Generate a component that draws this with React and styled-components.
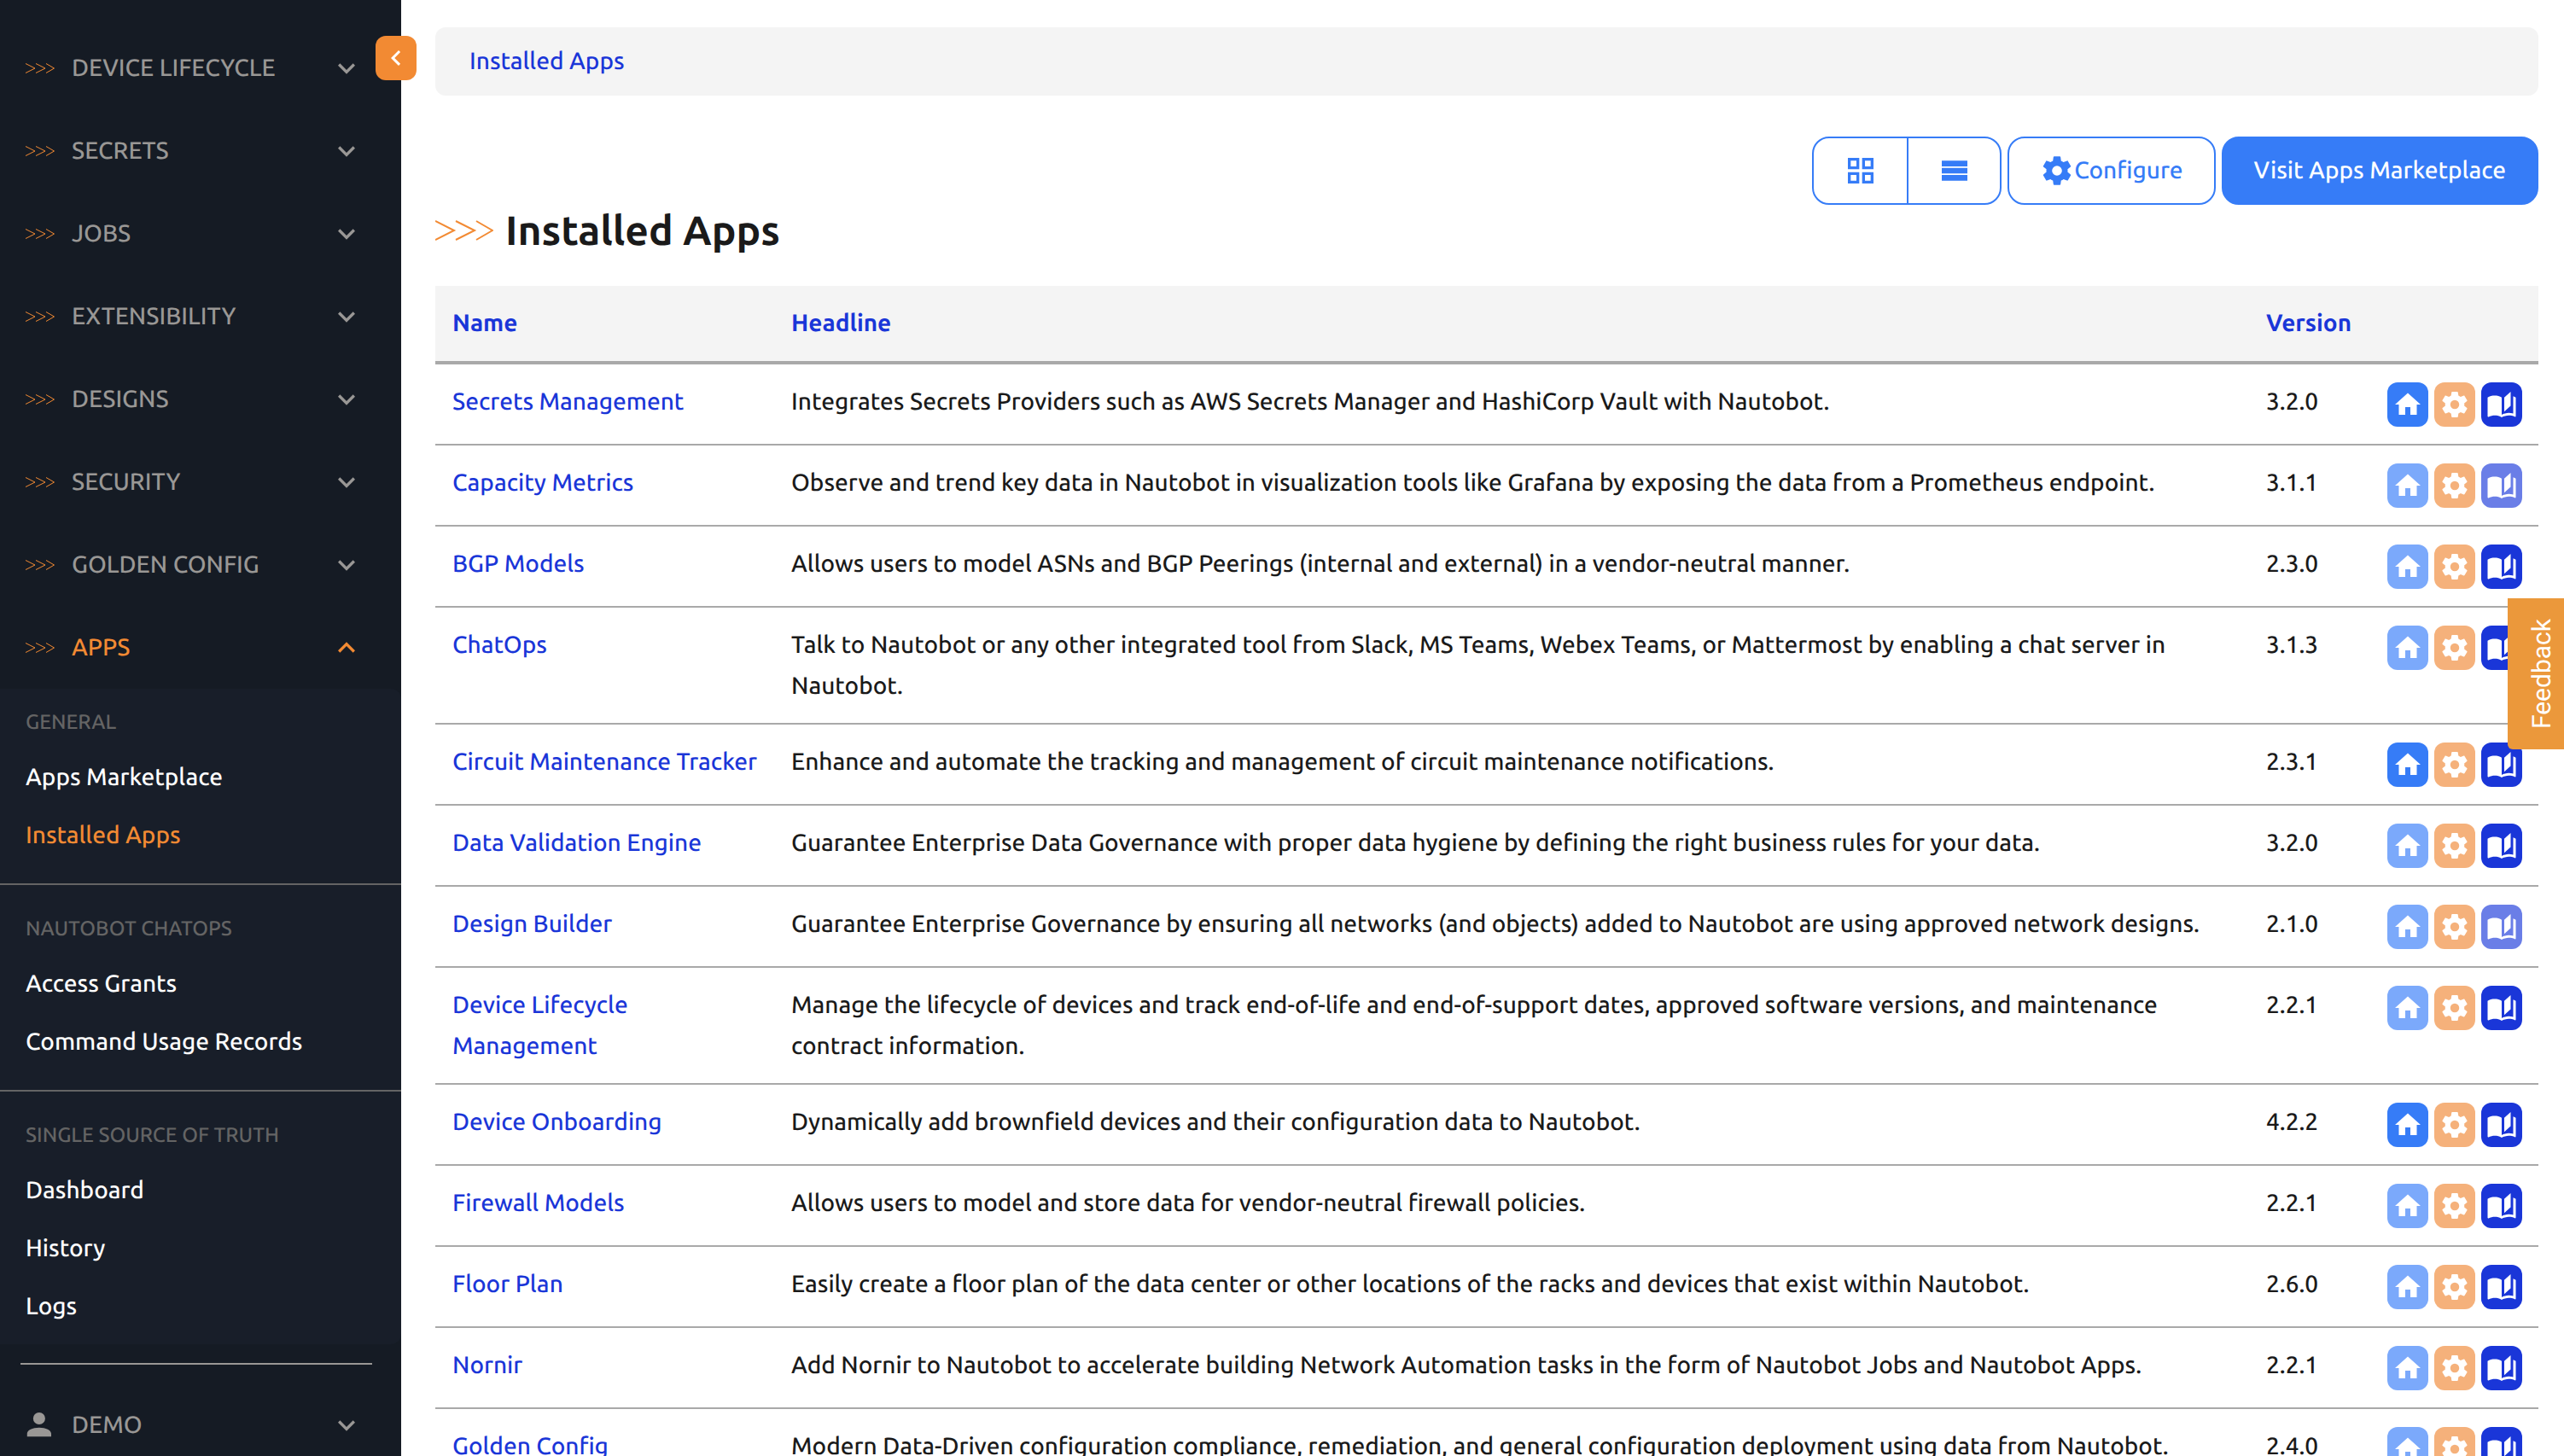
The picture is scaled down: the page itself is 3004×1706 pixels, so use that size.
import React from "react";
import styled, { createGlobalStyle, css } from "styled-components";

const GlobalStyle = createGlobalStyle`
  *, *::before, *::after { box-sizing: border-box; }
  body {
    margin: 0;
    background: #fff;
    color: #1a1a1a;
    font-family: Ubuntu, "Noto Sans", sans-serif;
    font-size: 28px;
    font-weight: 500;
    line-height: 48px;
    text-rendering: geometricPrecision;
  }
  a { color: inherit; text-decoration: none; }
  button { font: inherit; text-rendering: inherit; cursor: pointer; }
`;

const ICONS = {
  chevronDown: "M7.41,8.58L12,13.17L16.59,8.58L18,10L12,16L6,10L7.41,8.58Z",
  chevronUp: "M7.41,15.41L12,10.83L16.59,15.41L18,14L12,8L6,14L7.41,15.41Z",
  chevronLeft: "M15.41,16.58L10.83,12L15.41,7.41L14,6L8,12L14,18L15.41,16.58Z",
  account:
    "M12,4A4,4 0 0,1 16,8A4,4 0 0,1 12,12A4,4 0 0,1 8,8A4,4 0 0,1 12,4M12,14C16.42,14 20,15.79 20,18V20H4V18C4,15.79 7.58,14 12,14Z",
  home: "M10,20V14H14V20H19V12H22L12,3L2,12H5V20H10Z",
  cog: "M12,15.5A3.5,3.5 0 0,1 8.5,12A3.5,3.5 0 0,1 12,8.5A3.5,3.5 0 0,1 15.5,12A3.5,3.5 0 0,1 12,15.5M19.43,12.97C19.47,12.65 19.5,12.33 19.5,12C19.5,11.67 19.47,11.34 19.43,11L21.54,9.37C21.73,9.22 21.78,8.95 21.66,8.73L19.66,5.27C19.54,5.05 19.27,4.96 19.05,5.05L16.56,6.05C16.04,5.66 15.5,5.32 14.87,5.07L14.5,2.42C14.46,2.18 14.25,2 14,2H10C9.75,2 9.54,2.18 9.5,2.42L9.13,5.07C8.5,5.32 7.96,5.66 7.44,6.05L4.95,5.05C4.73,4.96 4.46,5.05 4.34,5.27L2.34,8.73C2.21,8.95 2.27,9.22 2.46,9.37L4.57,11C4.53,11.34 4.5,11.67 4.5,12C4.5,12.33 4.53,12.65 4.57,12.97L2.46,14.63C2.27,14.78 2.21,15.05 2.34,15.27L4.34,18.73C4.46,18.95 4.73,19.03 4.95,18.95L7.44,17.94C7.96,18.34 8.5,18.68 9.13,18.93L9.5,21.58C9.54,21.82 9.75,22 10,22H14C14.25,22 14.46,21.82 14.5,21.58L14.87,18.93C15.5,18.67 16.04,18.34 16.56,17.94L19.05,18.95C19.27,19.03 19.54,18.95 19.66,18.73L21.66,15.27C21.78,15.05 21.73,14.78 21.54,14.63L19.43,12.97Z",
  book: "M19 2L14 6.5V17.5L19 13V2M6.5 5C4.55 5 2.45 5.4 1 6.5V21.16C1 21.41 1.25 21.66 1.5 21.66C1.6 21.66 1.65 21.59 1.75 21.59C3.1 20.94 5.05 20.5 6.5 20.5C8.45 20.5 10.55 20.9 12 22C13.35 21.15 15.8 20.5 17.5 20.5C19.15 20.5 20.85 20.81 22.25 21.56C22.35 21.61 22.4 21.59 22.5 21.59C22.75 21.59 23 21.34 23 21.09V6.5C22.4 6.05 21.75 5.75 21 5.5V19C19.9 18.65 18.7 18.5 17.5 18.5C15.8 18.5 13.35 19.15 12 20V6.5C10.55 5.4 8.45 5 6.5 5Z",
  grid: "M3 11H11V3H3M5 5H9V9H5M13 21H21V13H13M15 15H19V19H15M3 21H11V13H3M5 15H9V19H5M13 3V11H21V3M19 9H15V5H19Z",
  rows: "M3 5H21V9H3ZM3 10H21V14H3ZM3 15H21V19H3Z",
};

const Svg = styled.svg`
  display: block;
  flex: none;
  fill: currentColor;
`;

const Icon = ({ name, size = 40, box = "0 0 24 24" }) => (
  <Svg width={size} height={size} viewBox={box} fillRule="evenodd" aria-hidden="true">
    <path d={ICONS[name]} />
  </Svg>
);

const ArrowsSvg = styled.svg`
  display: block;
  flex: none;
  fill: none;
  stroke: #f28a33;
`;

const Arrows = ({ width, height, stroke }) => (
  <ArrowsSvg width={width} height={height} viewBox="0 0 68 24" strokeWidth={stroke} aria-hidden="true">
    <path d="M0 1L22 12L0 23M24 1L46 12L24 23M48 1L67 12L48 23" />
  </ArrowsSvg>
);

const Shell = styled.div`
  display: flex;
  height: 100vh;
  overflow: hidden;
`;

const Sidebar = styled.aside`
  position: relative;
  flex: 0 0 470px;
  padding-top: 31px;
  background: #151b24;
  color: #999795;
`;

const CollapseButton = styled.button`
  position: absolute;
  top: 42px;
  right: -18px;
  display: flex;
  align-items: center;
  justify-content: center;
  width: 48px;
  height: 52px;
  padding: 0;
  border: 0;
  border-radius: 12px;
  background: #f28a33;
  color: #fff;
`;

const MenuToggle = styled.button`
  display: flex;
  align-items: center;
  width: 100%;
  height: 97px;
  padding: 0 44px 0 30px;
  border: 0;
  background: none;
  color: ${(p) => (p.$active ? "#f28a33" : "#999795")};
  text-align: left;
`;

const MenuMark = styled.span`
  display: flex;
  width: 54px;
`;

const MenuLabel = styled.span`
  flex: 1;
`;

const SubMenu = styled.div`
  background: #181e29;
  border-radius: 0 12px 12px 0;
`;

const SubSection = styled.section`
  padding: 22px 0 10px;
  & + & {
    margin-top: 12px;
    padding-top: 34px;
    border-top: 2px solid #646464;
  }
`;

const SubHeading = styled.h2`
  margin: 0 0 14px;
  padding-left: 30px;
  color: #646464;
  font-size: 24px;
  font-weight: inherit;
  line-height: 34px;
`;

const SubLink = styled.a`
  display: block;
  padding-left: 30px;
  color: ${(p) => (p.$active ? "#f28a33" : "#fff")};
  line-height: 68px;
`;

const MenuRule = styled.hr`
  height: 2px;
  margin: 22px 34px 22px 24px;
  border: 0;
  background: #999795;
`;

const Main = styled.main`
  flex: 1;
  min-width: 0;
  padding: 32px 30px 0 40px;
`;

const Breadcrumb = styled.nav`
  padding: 16px 40px;
  border-radius: 12px;
  background: #f4f4f4;
  color: #1a36d8;
`;

const Toolbar = styled.div`
  display: flex;
  justify-content: flex-end;
  gap: 7px;
  margin-top: 48px;
`;

const outline = css`
  border: 2px solid #367cf7;
  background: #fff;
  color: #367cf7;
`;

const ToolButton = styled.button`
  display: flex;
  align-items: center;
  height: 80px;
  padding: 0 36px;
  border-radius: 20px;
  ${outline}
  ${(p) => p.$primary && css`background: #367cf7; color: #fff;`}
`;

const ViewSwitch = styled.div`
  display: flex;
  height: 80px;
  border-radius: 20px;
  overflow: hidden;
  ${outline}
`;

const ViewButton = styled.button`
  display: flex;
  align-items: center;
  justify-content: center;
  width: 109px;
  padding: 0;
  border: 0;
  background: none;
  color: inherit;
  & + & {
    border-left: 2px solid #367cf7;
  }
`;

const TitleRow = styled.header`
  display: flex;
  align-items: center;
  gap: 14px;
  margin-bottom: 35px;
`;

const Title = styled.h1`
  margin: 0;
  font-size: 48px;
  font-weight: 600;
  line-height: 60px;
`;

const Table = styled.table`
  width: 100%;
  border-collapse: separate;
  border-spacing: 0;
  table-layout: fixed;
`;

const Col = styled.col`
  width: ${(p) => p.$width};
`;

const Th = styled.th`
  padding: 20px;
  border-bottom: 4px solid #a9a9a9;
  background: #f4f4f4;
  color: #1a36d8;
  font-weight: 700;
  text-align: left;
`;

const Td = styled.td`
  height: 95px;
  padding: 20px ${(p) => (p.$wide ? "40px" : "10px")} 19px 20px;
  border-bottom: 2px solid #a9a9a9;
  vertical-align: top;
`;

const NameLink = styled.a`
  color: #1a36d8;
`;

const Actions = styled.div`
  display: flex;
  gap: 7px;
  padding-top: 1px;
`;

const TONES = { home: "#367cf7", cog: "#f5b17b", book: "#1a36d8" };
const TONES_OFF = { home: "#7ba9fb", cog: "#f5b17b", book: "#6a7ee7" };

const ActionButton = styled.button`
  display: flex;
  align-items: center;
  justify-content: center;
  width: 48px;
  height: 52px;
  padding: 0;
  border: 0;
  border-radius: 12px;
  background: ${(p) => (p.disabled ? TONES_OFF : TONES)[p.$kind]};
  color: #fff;
`;

const Feedback = styled.button`
  position: fixed;
  top: 701px;
  right: 0;
  display: flex;
  align-items: center;
  justify-content: center;
  width: 66px;
  height: 177px;
  padding: 0 0 0 16px;
  border: 0;
  border-radius: 0 0 0 6px;
  background: #eb983b;
  color: #fff;
`;

const FeedbackLabel = styled.span`
  writing-mode: vertical-rl;
  rotate: 180deg;
  font-family: Roboto, sans-serif;
  font-size: 30px;
  font-weight: 400;
  line-height: 50px;
`;

const MENU = [
  "DEVICE LIFECYCLE",
  "SECRETS",
  "JOBS",
  "EXTENSIBILITY",
  "DESIGNS",
  "SECURITY",
  "GOLDEN CONFIG",
];

const SECTIONS = [
  { title: "GENERAL", links: ["Apps Marketplace", "Installed Apps"] },
  { title: "NAUTOBOT CHATOPS", links: ["Access Grants", "Command Usage Records"] },
  { title: "SINGLE SOURCE OF TRUTH", links: ["Dashboard", "History", "Logs"] },
];

const APPS = [
  { name: "Secrets Management", headline: "Integrates Secrets Providers such as AWS Secrets Manager and HashiCorp Vault with Nautobot.", version: "3.2.0", home: true, docs: true },
  { name: "Capacity Metrics", headline: "Observe and trend key data in Nautobot in visualization tools like Grafana by exposing the data from a Prometheus endpoint.", version: "3.1.1", home: false, docs: false },
  { name: "BGP Models", headline: "Allows users to model ASNs and BGP Peerings (internal and external) in a vendor-neutral manner.", version: "2.3.0", home: false, docs: true },
  { name: "ChatOps", headline: "Talk to Nautobot or any other integrated tool from Slack, MS Teams, Webex Teams, or Mattermost by enabling a chat server in Nautobot.", version: "3.1.3", home: false, docs: true },
  { name: "Circuit Maintenance Tracker", headline: "Enhance and automate the tracking and management of circuit maintenance notifications.", version: "2.3.1", home: true, docs: true },
  { name: "Data Validation Engine", headline: "Guarantee Enterprise Data Governance with proper data hygiene by defining the right business rules for your data.", version: "3.2.0", home: false, docs: true },
  { name: "Design Builder", headline: "Guarantee Enterprise Governance by ensuring all networks (and objects) added to Nautobot are using approved network designs.", version: "2.1.0", home: false, docs: false },
  { name: "Device Lifecycle Management", headline: "Manage the lifecycle of devices and track end-of-life and end-of-support dates, approved software versions, and maintenance contract information.", version: "2.2.1", home: false, docs: true },
  { name: "Device Onboarding", headline: "Dynamically add brownfield devices and their configuration data to Nautobot.", version: "4.2.2", home: true, docs: true },
  { name: "Firewall Models", headline: "Allows users to model and store data for vendor-neutral firewall policies.", version: "2.2.1", home: false, docs: true },
  { name: "Floor Plan", headline: "Easily create a floor plan of the data center or other locations of the racks and devices that exist within Nautobot.", version: "2.6.0", home: false, docs: true },
  { name: "Nornir", headline: "Add Nornir to Nautobot to accelerate building Network Automation tasks in the form of Nautobot Jobs and Nautobot Apps.", version: "2.2.1", home: false, docs: true },
  { name: "Golden Config", headline: "Modern Data-Driven configuration compliance, remediation, and general configuration deployment using data from Nautobot.", version: "2.4.0", home: false, docs: true },
];

const MenuItem = ({ label, active }) => (
  <MenuToggle $active={active} aria-expanded={!!active}>
    <MenuMark>
      <Arrows width={34} height={12} stroke={2} />
    </MenuMark>
    <MenuLabel>{label}</MenuLabel>
    <Icon name={active ? "chevronUp" : "chevronDown"} />
  </MenuToggle>
);

const AppRow = ({ app }) => (
  <tr>
    <Td>
      <NameLink href="#app">{app.name}</NameLink>
    </Td>
    <Td $wide>{app.headline}</Td>
    <Td>{app.version}</Td>
    <Td>
      <Actions>
        <ActionButton $kind="home" disabled={!app.home} aria-label="Home">
          <Icon name="home" size={36} />
        </ActionButton>
        <ActionButton $kind="cog" disabled aria-label="Configure">
          <Icon name="cog" size={36} />
        </ActionButton>
        <ActionButton $kind="book" disabled={!app.docs} aria-label="Docs">
          <Icon name="book" size={36} />
        </ActionButton>
      </Actions>
    </Td>
  </tr>
);

export default function App() {
  return (
    <>
      <GlobalStyle />
      <Shell>
        <Sidebar>
          {MENU.map((label) => (
            <MenuItem key={label} label={label} />
          ))}
          <MenuItem label="APPS" active />
          <SubMenu>
            {SECTIONS.map((section) => (
              <SubSection key={section.title}>
                <SubHeading>{section.title}</SubHeading>
                {section.links.map((link) => (
                  <SubLink key={link} href="#menu" $active={link === "Installed Apps"}>
                    {link}
                  </SubLink>
                ))}
              </SubSection>
            ))}
          </SubMenu>
          <MenuRule />
          <MenuToggle aria-expanded={false}>
            <MenuMark>
              <Icon name="account" size={30} box="3 4 17 17" />
            </MenuMark>
            <MenuLabel>DEMO</MenuLabel>
            <Icon name="chevronDown" />
          </MenuToggle>
          <CollapseButton aria-label="Collapse menu">
            <Icon name="chevronLeft" size={36} />
          </CollapseButton>
        </Sidebar>
        <Main>
          <Breadcrumb>
            <a href="#apps">Installed Apps</a>
          </Breadcrumb>
          <Toolbar>
            <ViewSwitch>
              <ViewButton aria-label="Tile view">
                <Icon name="grid" />
              </ViewButton>
              <ViewButton aria-label="List view">
                <Icon name="rows" />
              </ViewButton>
            </ViewSwitch>
            <ToolButton>
              <Icon name="cog" />
              Configure
            </ToolButton>
            <ToolButton $primary>Visit Apps Marketplace</ToolButton>
          </Toolbar>
          <TitleRow>
            <Arrows width={68} height={24} stroke={2} />
            <Title>Installed Apps</Title>
          </TitleRow>
          <Table>
            <colgroup>
              <Col $width="397px" />
              <Col />
              <Col $width="142px" />
              <Col $width="197px" />
            </colgroup>
            <thead>
              <tr>
                <Th>Name</Th>
                <Th>Headline</Th>
                <Th>Version</Th>
                <Th aria-label="Actions" />
              </tr>
            </thead>
            <tbody>
              {APPS.map((app) => (
                <AppRow key={app.name} app={app} />
              ))}
            </tbody>
          </Table>
        </Main>
      </Shell>
      <Feedback>
        <FeedbackLabel>Feedback</FeedbackLabel>
      </Feedback>
    </>
  );
}
